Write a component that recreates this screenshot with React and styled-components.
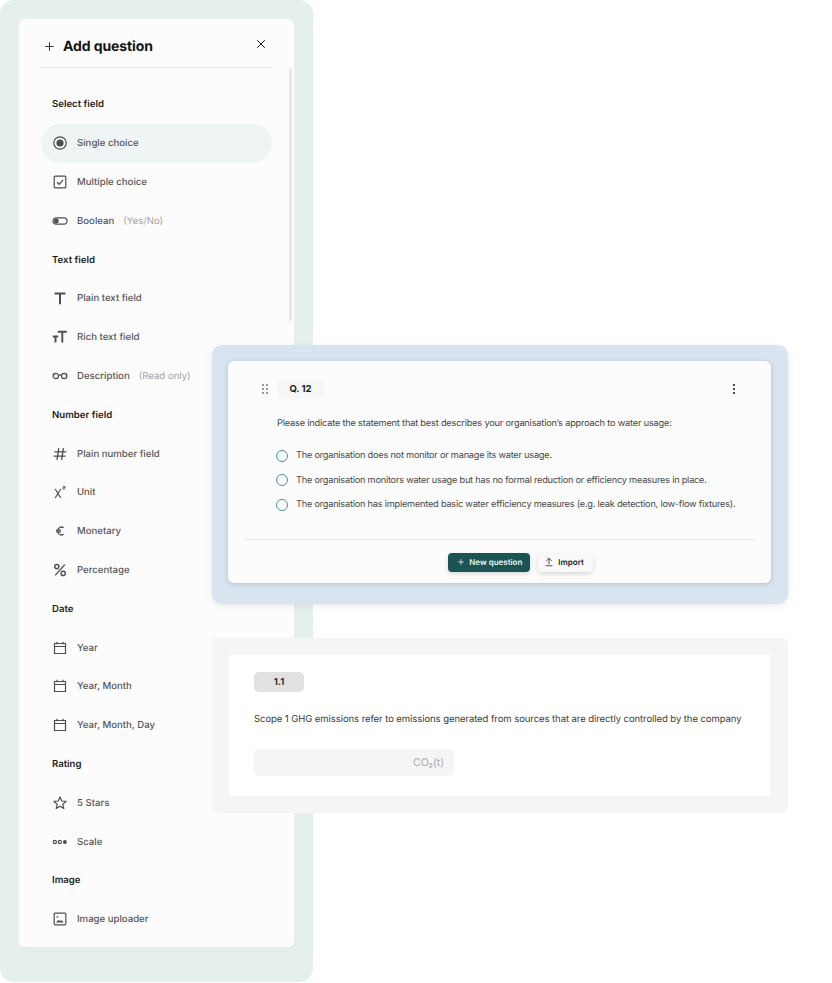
import React from "react";
import styled, { createGlobalStyle } from "styled-components";
import { LuPlus, LuX, LuArrowUpFromLine } from "react-icons/lu";

const GlobalStyle = createGlobalStyle`
  html, body { margin: 0; padding: 0; background: #fff; }
  body {
    font-family: "Inter", "Noto Sans", sans-serif;
    color: #1b1b1b;
    text-rendering: geometricPrecision;
  }
`;

const Page = styled.div`
  position: relative;
  width: 832px;
  height: 983px;
  overflow: hidden;
  background: #fff;
`;

const SidePanel = styled.aside`
  width: 313px;
  height: 982px;
  box-sizing: border-box;
  padding: 19px 19px 35px;
  background: #e5f0ec;
  border-radius: 14px;
`;

const Drawer = styled.div`
  position: relative;
  height: 928px;
  box-sizing: border-box;
  padding: 0 22px;
  background: #fcfcfc;
  border-radius: 6px;
`;

const DrawerHeader = styled.header`
  height: 49px;
  box-sizing: border-box;
  display: flex;
  align-items: center;
  padding: 6px 4px 0 2px;
  border-bottom: 1px solid #e6e9e8;
  color: #151515;
`;

const DrawerTitle = styled.h2`
  flex: 1;
  margin: 0 0 0 7px;
  font-size: 14px;
  font-weight: 700;
  letter-spacing: -0.1px;
`;

const CloseIcon = styled(LuX)`
  margin-bottom: 4px;
`;

const Scrollbar = styled.div`
  position: absolute;
  top: 49px;
  right: 2px;
  width: 3px;
  height: 253px;
  background: #e8e8e8;
  border-radius: 2px;
`;

const FieldList = styled.div`
  display: flex;
  flex-direction: column;
  padding-top: 17px;
`;

const SectionLabel = styled.div`
  height: 38.8px;
  box-sizing: border-box;
  display: flex;
  align-items: center;
  padding: 1px 0 0 11px;
  font-size: 9.6px;
  font-weight: 600;
  color: #1c1c1c;
`;

const FieldRow = styled.div`
  height: 38.8px;
  display: flex;
  align-items: center;
  box-sizing: border-box;
  padding-left: 11px;
  border-radius: 20px;
  font-size: 9.6px;
  font-weight: 500;
  color: #565656;
  background: ${(p) => (p.$active ? "#eef5f4" : "transparent")};
`;

const FieldLabel = styled.span`
  margin-top: 1px;
`;

const FieldIcon = styled.svg`
  width: 16px;
  height: 16px;
  margin-right: 9px;
  flex: none;
  color: #4e4e4e;
`;

const Hint = styled.span`
  margin: 1px 0 0 9px;
  font-weight: 400;
  color: #a3a3a3;
`;

const Overlays = styled.div`
  position: absolute;
  left: 212px;
  top: 345px;
  width: 576px;
  display: flex;
  flex-direction: column;
  gap: 34px;
`;

const QuestionFrame = styled.section`
  height: 259px;
  box-sizing: border-box;
  padding: 16px 17px 21px 16px;
  background: #d8e4ef;
  border-radius: 10px;
  box-shadow: 0 2px 6px rgba(60, 80, 100, 0.12);
`;

const QuestionCard = styled.div`
  height: 100%;
  box-sizing: border-box;
  padding: 18px 16px 0;
  display: flex;
  flex-direction: column;
  background: #fcfcfc;
  border-radius: 6px;
  box-shadow: 0 1px 5px rgba(40, 60, 80, 0.2);
`;

const QuestionHead = styled.div`
  display: flex;
  align-items: center;
  height: 20px;
  padding: 0 15px 0 18px;
`;

const QuestionTag = styled.span`
  margin-left: 9px;
  width: 47px;
  height: 19px;
  display: flex;
  align-items: center;
  justify-content: center;
  background: #f6f6f6;
  border-radius: 5px;
  font-size: 9.5px;
  font-weight: 700;
  color: #1a1a1a;
`;

const Spacer = styled.div`
  flex: 1;
`;

const QuestionText = styled.p`
  margin: 17.5px 0 0 33px;
  font-size: 9.2px;
  line-height: 14px;
  letter-spacing: -0.18px;
  white-space: nowrap;
  color: #444;
`;

const OptionList = styled.div`
  margin: 18px 0 0 32px;
  display: flex;
  flex-direction: column;
  gap: 10.5px;
`;

const Option = styled.label`
  display: flex;
  align-items: center;
  height: 14px;
  font-size: 9.2px;
  letter-spacing: -0.22px;
  white-space: nowrap;
  color: #484848;
`;

const RadioDot = styled.span`
  width: 12px;
  height: 12px;
  box-sizing: border-box;
  margin-right: 8px;
  border: 1.2px solid #4d9399;
  border-radius: 50%;
  flex: none;
`;

const CardFooter = styled.div`
  margin-top: 27.5px;
  flex: 1;
  display: flex;
  justify-content: center;
  align-items: flex-start;
  gap: 8px;
  padding: 12.5px 0 0 42px;
  border-top: 1px solid #e6e8e8;
`;

const Button = styled.button`
  height: 19px;
  display: flex;
  align-items: center;
  gap: 4px;
  border: 0;
  border-radius: 4px;
  font-family: inherit;
  font-size: 8px;
  font-weight: 600;
  text-rendering: geometricPrecision;
  padding: ${(p) => (p.$primary ? "0 8px 0 9px" : "0 9px 0 6px")};
  color: ${(p) => (p.$primary ? "#eef5f4" : "#222")};
  background: ${(p) => (p.$primary ? "#1c5456" : "#f9f9f9")};
  box-shadow: 0 2px 5px rgba(0, 0, 0, 0.14);
`;

const MetricFrame = styled.section`
  height: 175px;
  box-sizing: border-box;
  padding: 17px 18px 17px 17px;
  background: #f5f5f5;
  border-radius: 6px;
`;

const MetricCard = styled.div`
  height: 100%;
  box-sizing: border-box;
  padding: 17px 25px;
  background: #fff;
`;

const MetricTag = styled.div`
  width: 50px;
  height: 20px;
  display: flex;
  align-items: center;
  justify-content: center;
  background: #e1e1e1;
  border-radius: 5px;
  font-size: 9.5px;
  font-weight: 700;
  color: #333;
`;

const MetricText = styled.p`
  margin: 21px 0 0;
  font-size: 9.5px;
  line-height: 14px;
  letter-spacing: -0.07px;
  white-space: nowrap;
  color: #3a3a3a;
`;

const UnitInput = styled.div`
  margin-top: 22px;
  width: 200px;
  height: 27px;
  box-sizing: border-box;
  padding-right: 10px;
  display: flex;
  align-items: center;
  justify-content: flex-end;
  background: #f5f5f5;
  border-radius: 5px;
  font-size: 10.5px;
  color: #ababab;
`;

const Icon = ({ children }) => (
  <FieldIcon viewBox="0 0 16 16" fill="none" stroke="currentColor" strokeWidth="1.2" aria-hidden="true">
    {children}
  </FieldIcon>
);

const Calendar = () => (
  <Icon>
    <path d="M2.5 3.5h11v10h-11zM2.5 6.5h11M5 1.8v2.4M11 1.8v2.4" />
  </Icon>
);

const icons = {
  single: (
    <Icon>
      <circle cx="8" cy="8" r="6.2" />
      <circle cx="8" cy="8" r="3.6" fill="currentColor" stroke="none" />
    </Icon>
  ),
  multiple: (
    <Icon>
      <rect x="2.2" y="2.2" width="11.6" height="11.6" rx="1" />
      <path d="M5 8.2l2.2 2.1L11 6" />
    </Icon>
  ),
  boolean: (
    <Icon>
      <rect x="1" y="4.8" width="14" height="6.4" rx="3.2" />
      <circle cx="4.4" cy="8" r="2.4" fill="currentColor" stroke="none" />
    </Icon>
  ),
  text: (
    <Icon>
      <path d="M2.6 3.6h10.8M8 3.6v10.6" strokeWidth="2" />
    </Icon>
  ),
  rich: (
    <Icon>
      <path d="M5.8 2.8h9M10.3 2.8v10.6M.8 7.5h5.4M3.5 7.5v5.9" strokeWidth="1.9" />
    </Icon>
  ),
  glasses: (
    <Icon>
      <circle cx="3.8" cy="8" r="2.7" />
      <circle cx="12.2" cy="8" r="2.7" />
      <path d="M6.5 7.4c1-.7 2-.7 3 0M1.1 7.4l.9-1.4M14.9 7.4l-.9-1.4" />
    </Icon>
  ),
  hash: (
    <Icon>
      <path d="M2.4 5.8h12M1.6 10.2h12M6.8 2.2L5 13.8M11.4 2.2L9.6 13.8" strokeWidth="1.3" />
    </Icon>
  ),
  unit: (
    <Icon>
      <path d="M3.2 5l5.6 9M8.8 5l-5.6 9" />
      <path d="M10.8 2.4h2.4v1.3h-2.3v1.3h2.4" strokeWidth=".8" />
    </Icon>
  ),
  euro: (
    <Icon>
      <path d="M11.6 4.8A3.6 3.6 0 0 0 5.8 8a3.6 3.6 0 0 0 5.8 3.2M4 7.2h5M4 8.8h5" strokeWidth="1.3" />
    </Icon>
  ),
  percent: (
    <Icon>
      <circle cx="4.8" cy="4.6" r="2.1" strokeWidth="1.4" />
      <circle cx="11.2" cy="11.4" r="2.1" strokeWidth="1.4" />
      <path d="M12.8 2.6L3.2 13.4" strokeWidth="1.4" />
    </Icon>
  ),
  star: (
    <Icon>
      <path d="M8 2l1.8 4 4.3.4-3.3 2.9 1 4.3L8 11.3l-3.8 2.3 1-4.3-3.3-2.9 4.3-.4z" strokeLinejoin="round" />
    </Icon>
  ),
  scale: (
    <Icon>
      <circle cx="2.8" cy="8" r="1.6" strokeWidth="1.2" />
      <circle cx="7.8" cy="8" r="1.6" strokeWidth="1.2" />
      <circle cx="12.9" cy="8" r="2" fill="currentColor" stroke="none" />
    </Icon>
  ),
  image: (
    <Icon>
      <rect x="2.2" y="2.2" width="11.6" height="11.6" rx="1" />
      <circle cx="5.4" cy="5.8" r=".9" fill="currentColor" stroke="none" />
      <path d="M4 11.4l2.4-2.6 1.6 1.5 1.2-1.2 2.6 2.3z" fill="currentColor" stroke="none" />
    </Icon>
  ),
  calendar: <Calendar />,
};

const fields = [
  { section: "Select field" },
  { label: "Single choice", icon: "single", active: true },
  { label: "Multiple choice", icon: "multiple" },
  { label: "Boolean", icon: "boolean", hint: "(Yes/No)" },
  { section: "Text field" },
  { label: "Plain text field", icon: "text" },
  { label: "Rich text field", icon: "rich" },
  { label: "Description", icon: "glasses", hint: "(Read only)" },
  { section: "Number field" },
  { label: "Plain number field", icon: "hash" },
  { label: "Unit", icon: "unit" },
  { label: "Monetary", icon: "euro" },
  { label: "Percentage", icon: "percent" },
  { section: "Date" },
  { label: "Year", icon: "calendar" },
  { label: "Year, Month", icon: "calendar" },
  { label: "Year, Month, Day", icon: "calendar" },
  { section: "Rating" },
  { label: "5 Stars", icon: "star" },
  { label: "Scale", icon: "scale" },
  { section: "Image" },
  { label: "Image uploader", icon: "image" },
];

const options = [
  "The organisation does not monitor or manage its water usage.",
  "The organisation monitors water usage but has no formal reduction or efficiency measures in place.",
  "The organisation has implemented basic water efficiency measures (e.g. leak detection, low-flow fixtures).",
];

const DragHandle = () => (
  <svg width="6" height="10" viewBox="0 0 6 10" fill="#666" aria-hidden="true">
    {[1, 5].map((x) =>
      [1, 5, 9].map((y) => <circle key={`${x}-${y}`} cx={x} cy={y} r="0.9" />)
    )}
  </svg>
);

const MoreIcon = () => (
  <svg width="12" height="12" viewBox="0 0 12 12" fill="#222" aria-hidden="true">
    <circle cx="6" cy="2" r="1.1" />
    <circle cx="6" cy="6" r="1.1" />
    <circle cx="6" cy="10" r="1.1" />
  </svg>
);

export default function App() {
  return (
    <Page>
      <GlobalStyle />
      <SidePanel>
        <Drawer>
          <DrawerHeader>
            <LuPlus size={13} strokeWidth={1.6} />
            <DrawerTitle>Add question</DrawerTitle>
            <CloseIcon size={14} strokeWidth={1.7} />
          </DrawerHeader>
          <Scrollbar />
          <FieldList>
            {fields.map((f) =>
              f.section ? (
                <SectionLabel key={f.section}>{f.section}</SectionLabel>
              ) : (
                <FieldRow key={f.label} $active={f.active}>
                  {icons[f.icon]}
                  <FieldLabel>{f.label}</FieldLabel>
                  {f.hint && <Hint>{f.hint}</Hint>}
                </FieldRow>
              )
            )}
          </FieldList>
        </Drawer>
      </SidePanel>
      <Overlays>
        <QuestionFrame>
          <QuestionCard>
            <QuestionHead>
              <DragHandle />
              <QuestionTag>Q. 12</QuestionTag>
              <Spacer />
              <MoreIcon />
            </QuestionHead>
            <QuestionText>
              Please indicate the statement that best describes your organisation’s approach to water usage:
            </QuestionText>
            <OptionList>
              {options.map((o) => (
                <Option key={o}>
                  <RadioDot />
                  {o}
                </Option>
              ))}
            </OptionList>
            <CardFooter>
              <Button $primary>
                <LuPlus size={8} strokeWidth={2.4} />
                New question
              </Button>
              <Button>
                <LuArrowUpFromLine size={10} strokeWidth={1.8} />
                Import
              </Button>
            </CardFooter>
          </QuestionCard>
        </QuestionFrame>
        <MetricFrame>
          <MetricCard>
            <MetricTag>1.1</MetricTag>
            <MetricText>
              Scope 1 GHG emissions refer to emissions generated from sources that are directly controlled by the company
            </MetricText>
            <UnitInput>CO₂(t)</UnitInput>
          </MetricCard>
        </MetricFrame>
      </Overlays>
    </Page>
  );
}
